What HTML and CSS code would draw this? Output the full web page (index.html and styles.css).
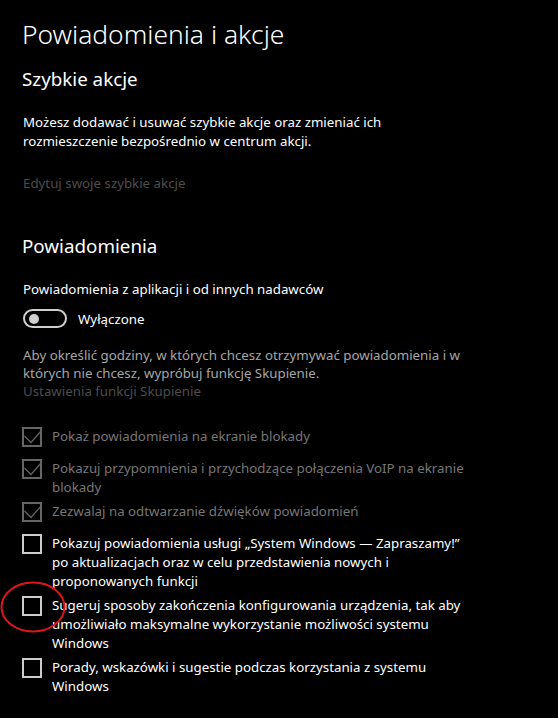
FILE: index.html
```html
<!DOCTYPE html>
<html lang="pl">
  <head>
    <meta charset="UTF-8" />
    <meta name="viewport" content="width=device-width, initial-scale=1.0" />
    <title>Powiadomienia i akcje</title>
    <link rel="stylesheet" href="styles.css">
  </head>
  <body>
    <div class="page">
      <h1 class="title">Powiadomienia i akcje</h1>

      <h2 class="section-title">Szybkie akcje</h2>
      <p class="text">
        Możesz dodawać i usuwać szybkie akcje oraz zmieniać ich<br />
        rozmieszczenie bezpośrednio w centrum akcji.
      </p>
      <p class="link-disabled edit-link">Edytuj swoje szybkie akcje</p>

      <h2 class="section-title notif-title">Powiadomienia</h2>
      <p class="text">Powiadomienia z aplikacji i od innych nadawców</p>
      <div class="toggle-row">
        <span class="toggle"><span class="toggle-knob"></span></span>
        <span class="toggle-label">Wyłączone</span>
      </div>

      <p class="text text-muted focus-info">
        Aby określić godziny, w których chcesz otrzymywać powiadomienia i w<br />
        których nie chcesz, wypróbuj funkcję Skupienie.
      </p>
      <p class="link-disabled focus-link">Ustawienia funkcji Skupienie</p>

      <div class="checks">
        <div class="check-row disabled">
          <span class="box">
            <svg viewBox="0 0 16 16" class="tick"><path d="M0.5 7 L7 13.5 L17.5 1.5" /></svg>
          </span>
          <span class="check-text">Pokaż powiadomienia na ekranie blokady</span>
        </div>
        <div class="check-row disabled">
          <span class="box">
            <svg viewBox="0 0 16 16" class="tick"><path d="M0.5 7 L7 13.5 L17.5 1.5" /></svg>
          </span>
          <span class="check-text">Pokazuj przypomnienia i przychodzące połączenia VoIP na ekranie<br />blokady</span>
        </div>
        <div class="check-row disabled">
          <span class="box">
            <svg viewBox="0 0 16 16" class="tick"><path d="M0.5 7 L7 13.5 L17.5 1.5" /></svg>
          </span>
          <span class="check-text">Zezwalaj na odtwarzanie dźwięków powiadomień</span>
        </div>
        <div class="check-row">
          <span class="box"></span>
          <span class="check-text">Pokazuj powiadomienia usługi „System Windows — Zapraszamy!”<br />po aktualizacjach oraz w celu przedstawienia nowych i<br />proponowanych funkcji</span>
        </div>
        <div class="check-row">
          <span class="box"></span>
          <span class="check-text">Sugeruj sposoby zakończenia konfigurowania urządzenia, tak aby<br />umożliwiało maksymalne wykorzystanie możliwości systemu<br />Windows</span>
          <!-- red marker drawn over the checkbox -->
          <svg class="marker" viewBox="0 0 66 52">
            <ellipse cx="33" cy="26" rx="31.5" ry="24.5" />
          </svg>
        </div>
        <div class="check-row">
          <span class="box"></span>
          <span class="check-text">Porady, wskazówki i sugestie podczas korzystania z systemu<br />Windows</span>
        </div>
      </div>
    </div>
  </body>
</html>
```

FILE: styles.css
```css
body {
  margin: 0;
  background-color: #000;
  color: #fff;
  font-family: "Noto Sans", "Open Sans", sans-serif;
  font-size: 13.3px;
}

.page {
  padding: 14px 0 0 22px;
  width: 510px;
}

.title {
  font-size: 26.4px;
  font-weight: 300;
  line-height: 40px;
  margin: 0;
}

.section-title {
  font-size: 18.8px;
  font-weight: 400;
  line-height: 28px;
  margin: 11px 0 0;
}

.notif-title {
  margin-top: 39px;
}

.text {
  margin: 20px 0 0;
  line-height: 19px;
  padding-left: 1px;
}

.text-muted {
  color: #a6a6a6;
}

.link-disabled {
  color: #4d4d4d;
  margin: 0;
  line-height: 19px;
  padding-left: 1px;
}

.edit-link {
  margin-top: 23px;
}

.toggle-row {
  display: flex;
  align-items: center;
  margin-top: 10px;
  padding-left: 1px;
}

.toggle {
  width: 44px;
  height: 19px;
  box-sizing: border-box;
  border: 2px solid #cfcfcf;
  border-radius: 10px;
  display: flex;
  align-items: center;
  padding-left: 4px;
}

.toggle-knob {
  width: 10px;
  height: 10px;
  border-radius: 50%;
  background-color: #cfcfcf;
}

.toggle-label {
  margin-left: 11px;
}

.focus-info {
  margin-top: 18px;
  line-height: 18px;
}

.focus-link {
  margin-top: 0;
}

.checks {
  margin-top: 26px;
}

.check-row {
  position: relative;
  display: flex;
  align-items: flex-start;
  min-height: 27px;
  margin-bottom: 5px;
  line-height: 19px;
}

.box {
  flex: none;
  width: 20px;
  height: 20px;
  box-sizing: border-box;
  border: 2px solid #cccccc;
  margin-right: 10px;
}

.check-row.disabled {
  color: #777;
}

.check-row.disabled .box {
  border-color: #666;
}

.tick {
  display: block;
  width: 16px;
  height: 16px;
  overflow: visible;
  fill: none;
  stroke: #666;
  stroke-width: 1.2;
}

.marker {
  position: absolute;
  left: -22px;
  top: -15px;
  width: 66px;
  height: 52px;
  fill: none;
  stroke: #e0141e;
  stroke-width: 2;
}
```
